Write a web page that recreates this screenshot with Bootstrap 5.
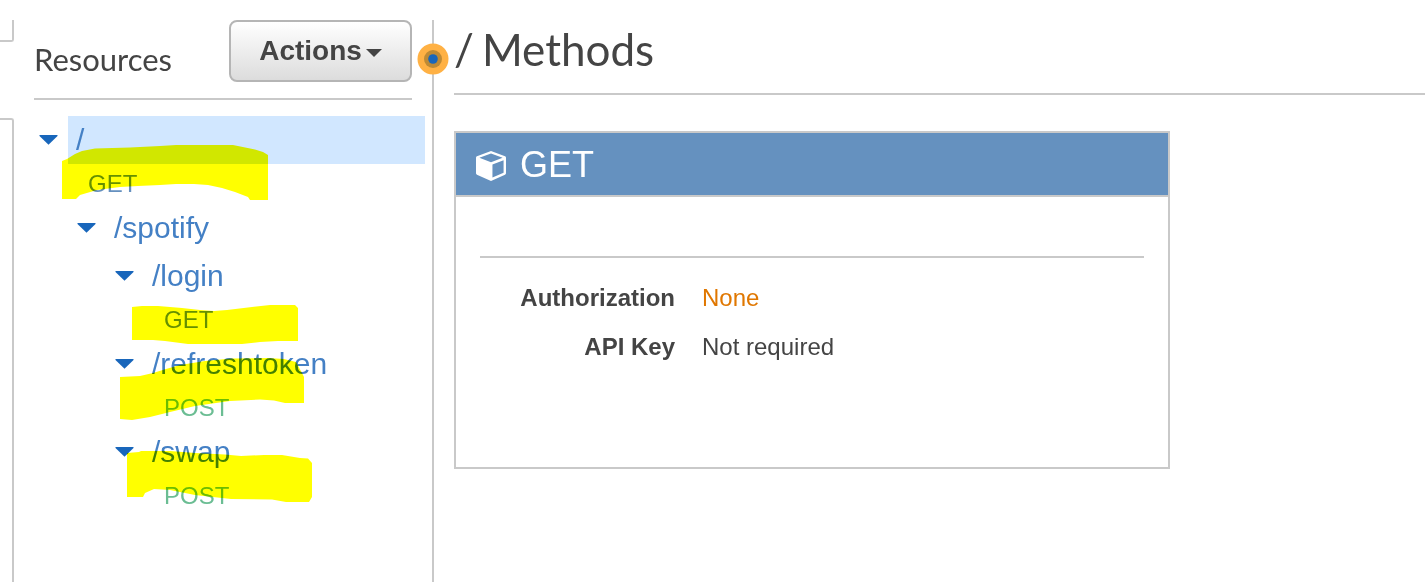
<!DOCTYPE html>
<html lang="en">
<head>
<meta charset="utf-8">
<meta name="viewport" content="width=device-width, initial-scale=1">
<title>API Resources</title>
<link href="https://cdn.jsdelivr.net/npm/bootstrap@5.3.0/dist/css/bootstrap.min.css" rel="stylesheet">
<style>
  :root { --line: #c9c9c9; --ink: #444; }
  body { font-family: "Liberation Sans", Arial, sans-serif; color: var(--ink); background: #fff; }
  h1, h2 { font-family: Lato, sans-serif; font-weight: 400; margin: 0; }
  .shell { padding-top: 20px; }
  .edge { width: 14px; }
  .edge-top { height: 22px; border: solid var(--line); border-width: 0 2px 2px 0; border-bottom-right-radius: 3px; }
  .edge-rest { margin-top: 76px; border: solid var(--line); border-width: 2px 2px 0 0; border-top-right-radius: 3px; }
  .sidebar { width: 420px; padding-left: 20px; border-right: 2px solid var(--line); }
  .sidebar-head { margin-right: 20px; padding-bottom: 16px; border-bottom: 2px solid var(--line); }
  .sidebar-head h2 { font-size: 31px; line-height: 36px; padding-top: 21px; }
  .btn-actions { width: 183px; height: 62px; font-size: 28px; font-weight: 700; line-height: 40px; color: var(--ink);
    border: 2px solid #b5b5b5; border-radius: 8px; background: linear-gradient(#fff, #dcdcdc); padding: 0; }
  .btn-actions:hover { color: var(--ink); border-color: #999; }
  .grip { top: 23px; right: -17px; width: 32px; height: 32px; }
  .tree { margin: 16px 7px 0 0; }
  .tree ul ul { padding-left: 38px !important; }
  .tree-row { height: 48px; }
  .toggle { width: 34px; padding: 0 0 0 5px; border: 0; background: none; line-height: 1; }
  .toggle svg { display: block; }
  .path-link { font-size: 30px; line-height: 48px; padding-left: 8px; color: #4480c5; text-decoration: none; }
  .path-link.active { background: #d1e7ff; }
  .verb { display: block; font-size: 24px; line-height: 40px; padding-left: 54px; text-decoration: none; }
  .verb-get { color: #6590bf; }
  .verb-post { color: #6bbd93; }
  .marker { top: 0; left: 0; pointer-events: none; mix-blend-mode: multiply; }
  .main-pane { padding-left: 20px; min-width: 0; }
  .main-pane h1 { display: flex; gap: 8px; font-size: 44px; line-height: 58px; padding-bottom: 15px; border-bottom: 2px solid var(--line); }
  .method-card { max-width: 716px; min-height: 338px; margin-top: 36px; border: 2px solid var(--line); }
  .method-head { height: 64px; padding-left: 20px; gap: 14px; background: #6591bf; border-bottom: 2px solid var(--line); }
  .method-head a { font-size: 36px; line-height: 60px; padding-top: 2px; color: #fff; text-decoration: none; }
  .method-body { margin: 59px 24px 0; padding-top: 15px; border-top: 2px solid var(--line); font-size: 24px; line-height: 49px; }
  .method-body dt { width: 195px; text-align: right; }
  .method-body dd { margin: 0 0 0 27px; }
  .auth-none { color: #e07700; }
</style>
</head>
<body>
<div class="shell d-flex min-vh-100">
  <div class="edge d-flex flex-column flex-shrink-0">
    <div class="edge-top"></div>
    <div class="edge-rest flex-grow-1"></div>
  </div>

  <aside class="sidebar position-relative flex-shrink-0">
    <div class="sidebar-head d-flex justify-content-between">
      <h2>Resources</h2>
      <button type="button" class="btn btn-actions d-flex align-items-center justify-content-center">Actions<svg class="ms-1 mt-1" width="16" height="8" viewBox="0 0 16 8" aria-hidden="true"><path d="M0 0h16L8 8z" fill="#444"/></svg></button>
    </div>
    <svg class="grip position-absolute" viewBox="0 0 32 32" aria-hidden="true">
      <circle cx="16" cy="16" r="15.5" fill="#ffb144"/><circle cx="16" cy="16" r="9" fill="#be8a35"/><circle cx="16" cy="16" r="4.8" fill="#1866bb"/>
    </svg>

    <nav class="tree position-relative" aria-label="Resources">
      <ul class="list-unstyled mb-0">
        <li>
          <div class="tree-row d-flex align-items-center"><button type="button" class="toggle" aria-label="Collapse /"><svg width="19" height="10" viewBox="0 0 19 10"><path d="M.5 0h18v1L9.500 9.700.5 1z" fill="#1866bb"/></svg></button><a class="path-link active flex-grow-1" href="#root">/</a></div>
          <a class="verb verb-get" href="#root-get">GET</a>
          <ul class="list-unstyled">
            <li>
              <div class="tree-row d-flex align-items-center"><button type="button" class="toggle" aria-label="Collapse /spotify"><svg width="19" height="10" viewBox="0 0 19 10"><path d="M.5 0h18v1L9.500 9.700.5 1z" fill="#1866bb"/></svg></button><a class="path-link" href="#spotify">/spotify</a></div>
              <ul class="list-unstyled">
                <li>
                  <div class="tree-row d-flex align-items-center"><button type="button" class="toggle" aria-label="Collapse /login"><svg width="19" height="10" viewBox="0 0 19 10"><path d="M.5 0h18v1L9.500 9.700.5 1z" fill="#1866bb"/></svg></button><a class="path-link" href="#login">/login</a></div>
                  <a class="verb verb-get" href="#login-get">GET</a>
                </li>
                <li>
                  <div class="tree-row d-flex align-items-center"><button type="button" class="toggle" aria-label="Collapse /refreshtoken"><svg width="19" height="10" viewBox="0 0 19 10"><path d="M.5 0h18v1L9.500 9.700.5 1z" fill="#1866bb"/></svg></button><a class="path-link" href="#refreshtoken">/refreshtoken</a></div>
                  <a class="verb verb-post" href="#refreshtoken-post">POST</a>
                </li>
                <li>
                  <div class="tree-row d-flex align-items-center"><button type="button" class="toggle" aria-label="Collapse /swap"><svg width="19" height="10" viewBox="0 0 19 10"><path d="M.5 0h18v1L9.500 9.700.5 1z" fill="#1866bb"/></svg></button><a class="path-link" href="#swap">/swap</a></div>
                  <a class="verb verb-post" href="#swap-post">POST</a>
                </li>
              </ul>
            </li>
          </ul>
        </li>
      </ul>
      <!-- highlighter strokes over the method names -->
      <svg class="marker position-absolute" width="391" height="400" viewBox="34 116 391 400" fill="#ff0" aria-hidden="true">
        <path d="M62 161L67 159 75 154 82 151 95 148.500 130 147.500 160 146 176 145H233L255 149.500 263 152 268 155V200H250L248 197 235 192 222 188 208 185 194 184H176L160 185 138 186 120 187 97 190 80 195 76 199H62z"/>
        <path d="M132 307L142 306H158L182 308 200 310 214 311 227 310 252 307 270 305H295L298 308V341H278L260 342 242 344H188L165 341 153 340H132z"/>
        <path d="M120 377L140 376 153 373 166 369 180 365 205 361 232 358.500 268 358 284 359 296 362 302 373 304 377V403H285L274 400.500 260 399.500 230 401 195 406 170 412 150 417 132 420 120 419z"/>
        <path d="M127 453L139 452 141 451H170L195 453 225 454.500 241 456 264 455H282L300 458 308 458.500 312 463V497L309 502H286L272 499.500 231 499 195 495 170 490 154 489 145 493 143 497H127z"/>
      </svg>
    </nav>
  </aside>

  <main class="main-pane flex-grow-1">
    <h1><span>/</span> <span>Methods</span></h1>
    <section class="method-card">
      <div class="method-head d-flex align-items-center">
        <svg class="mt-1" width="30" height="30" viewBox="0 0 31 31" aria-hidden="true"><path fill="#fff" fill-rule="evenodd" d="M15.500 0L30 5.500Q31 6 31 7V23Q31 24 30 24.500L15.500 31 1 24.500Q0 24 0 23V7Q0 6 1 5.500zM15.500 2.500L3.500 7 15.500 11.500 27.500 7zM17 14V27.500L28.500 22.500V9.500z"/></svg>
        <a href="#root-get">GET</a>
      </div>
      <dl class="method-body">
        <div class="d-flex"><dt>Authorization</dt><dd class="auth-none">None</dd></div>
        <div class="d-flex"><dt>API Key</dt><dd>Not required</dd></div>
      </dl>
    </section>
  </main>
</div>
<script src="https://cdn.jsdelivr.net/npm/bootstrap@5.3.0/dist/js/bootstrap.bundle.min.js"></script>
</body>
</html>
